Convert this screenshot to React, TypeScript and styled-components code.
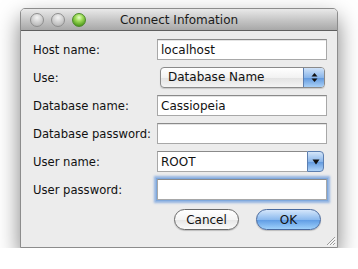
import styled, { createGlobalStyle } from "styled-components"

const GlobalStyle = createGlobalStyle`
    body {
        margin: 0;
        background: #ffffff;
        font-family: "Lucida Grande", "DejaVu Sans", sans-serif;
    }
`

type Row = { label: string; kind: "text" | "popup" | "combo"; value?: string; focused?: boolean }

const rows: Row[] = [
    { label: "Host name:", kind: "text", value: "localhost" },
    { label: "Use:", kind: "popup", value: "Database Name" },
    { label: "Database name:", kind: "text", value: "Cassiopeia" },
    { label: "Database password:", kind: "text", value: "" },
    { label: "User name:", kind: "combo", value: "ROOT" },
    { label: "User password:", kind: "text", value: "", focused: true },
]

export default function App() {
    return (
        <>
            <GlobalStyle />
            <Window>
                <TitleBar>
                    <Lights>
                        <Light />
                        <Light />
                        <Light $active />
                    </Lights>
                    <Title>Connect Infomation</Title>
                </TitleBar>
                <Body>
                    <Form>
                        {rows.map((row) => (
                            <FormRow key={row.label}>
                                <Label>{row.label}</Label>
                                {row.kind === "text" && (
                                    <TextField $focused={row.focused}>{row.value}</TextField>
                                )}
                                {row.kind === "popup" && (
                                    <Popup>
                                        <PopupText>{row.value}</PopupText>
                                        <Stepper>
                                            <svg width="7" height="11" viewBox="0 0 7 11">
                                                <path d="M3.5 1 L6.5 4.5 L0.5 4.5 Z" fill="#111" />
                                                <path d="M3.5 10 L6.5 6.5 L0.5 6.5 Z" fill="#111" />
                                            </svg>
                                        </Stepper>
                                    </Popup>
                                )}
                                {row.kind === "combo" && (
                                    <Combo>
                                        <ComboField>{row.value}</ComboField>
                                        <ComboArrow>
                                            <svg width="8" height="6" viewBox="0 0 8 6">
                                                <path d="M0.5 0.5 L7.5 0.5 L4 5.5 Z" fill="#111" />
                                            </svg>
                                        </ComboArrow>
                                    </Combo>
                                )}
                            </FormRow>
                        ))}
                    </Form>
                    <Buttons>
                        <PushButton>Cancel</PushButton>
                        <PushButton $primary>OK</PushButton>
                    </Buttons>
                    <Grip>
                        <svg width="11" height="11" viewBox="0 0 11 11">
                            <path d="M10 2 L2 10 M10 5 L5 10 M10 8 L8 10" stroke="#9a9a9a" strokeWidth="1" />
                            <path d="M10.5 3 L3 10.5 M10.5 6 L6 10.5 M10.5 9 L9 10.5" stroke="#fff" strokeWidth="1" />
                        </svg>
                    </Grip>
                </Body>
            </Window>
        </>
    )
}

const Window = styled.div`
    margin: 8px 0 0 20px;
    width: 318px;
    height: 240px;
    box-sizing: border-box;
    border: 1px solid #8c8c8c;
    border-radius: 5px 5px 0 0;
    box-shadow: 0 10px 22px rgba(0, 0, 0, 0.5);
    display: flex;
    flex-direction: column;
    overflow: hidden;
    background: #ececec;
`

const TitleBar = styled.div`
    position: relative;
    height: 21px;
    flex-shrink: 0;
    display: flex;
    align-items: center;
    justify-content: center;
    background: linear-gradient(#e9e9e9, #c4c4c4 55%, #a8a8a8);
    border-bottom: 1px solid #5f5f5f;
`

const Lights = styled.div`
    position: absolute;
    left: 9px;
    top: 4px;
    display: flex;
    gap: 7px;
`

const Light = styled.div<{ $active?: boolean }>`
    width: 12px;
    height: 12px;
    border-radius: 50%;
    border: 1px solid ${({ $active }) => ($active ? "#4c8a2a" : "#8e8e8e")};
    background: ${({ $active }) =>
        $active
            ? "radial-gradient(circle at 50% 30%, #e6ffc8 0, #9fdc5a 35%, #4f9a1c 80%, #7cc23b 100%)"
            : "radial-gradient(circle at 50% 30%, #f4f4f4 0, #d2d2d2 45%, #b4b4b4 85%, #cfcfcf 100%)"};
`

const Title = styled.div`
    font-size: 12px;
    color: #1a1a1a;
    margin-top: 1px;
`

const Body = styled.div`
    position: relative;
    flex: 1;
    padding: 8px 0 0 12px;
`

const Form = styled.div`
    display: flex;
    flex-direction: column;
    gap: 7px;
`

const FormRow = styled.div`
    display: flex;
    align-items: center;
    height: 21px;
`

const Label = styled.div`
    width: 124px;
    font-size: 11.6px;
    color: #111;
`

const TextField = styled.div<{ $focused?: boolean }>`
    box-sizing: border-box;
    width: 170px;
    height: 21px;
    padding: 2px 3px 0;
    background: #fff;
    border: 1px solid #a8a8a8;
    border-top-color: #8a8a8a;
    font-size: 12px;
    line-height: 17px;
    color: #111;
    box-shadow: ${({ $focused }) =>
        $focused ? "0 0 0 1px #7fa8dc, 0 0 2px 3px rgba(100, 150, 220, 0.65)" : "inset 0 1px 0 #e4e4e4"};
`

const Popup = styled.div`
    box-sizing: border-box;
    margin-left: 3px;
    width: 165px;
    height: 21px;
    display: flex;
    border: 1px solid #8a8a8a;
    border-radius: 4px;
    overflow: hidden;
    background: linear-gradient(#ffffff, #f2f2f2 50%, #e2e2e2 51%, #f4f4f4);
    box-shadow: 0 1px 1px rgba(0, 0, 0, 0.15);
`

const PopupText = styled.div`
    flex: 1;
    padding-left: 7px;
    font-size: 12px;
    line-height: 19px;
    color: #111;
`

const Stepper = styled.div`
    width: 20px;
    display: flex;
    align-items: center;
    justify-content: center;
    border-left: 1px solid #5d7fb0;
    background: linear-gradient(#cfe2f8, #8ab6ea 50%, #5f97dd 51%, #a9d0f7);
`

const Combo = styled.div`
    width: 167px;
    height: 21px;
    display: flex;
`

const ComboField = styled.div`
    box-sizing: border-box;
    flex: 1;
    height: 21px;
    padding: 1px 3px 0;
    background: #fff;
    border: 1px solid #a8a8a8;
    border-top-color: #8a8a8a;
    border-right: none;
    font-size: 12px;
    line-height: 18px;
    color: #111;
`

const ComboArrow = styled.div`
    box-sizing: border-box;
    width: 17px;
    height: 21px;
    display: flex;
    align-items: center;
    justify-content: center;
    border: 1px solid #5d7fb0;
    border-radius: 0 4px 4px 0;
    background: linear-gradient(#d6e7fa, #8ab6ea 50%, #5f97dd 51%, #b0d4f8);
`

const Buttons = styled.div`
    display: flex;
    justify-content: flex-end;
    gap: 17px;
    margin-top: 9px;
    padding-right: 16px;
`

const PushButton = styled.div<{ $primary?: boolean }>`
    box-sizing: border-box;
    width: 65px;
    height: 21px;
    border-radius: 11px;
    display: flex;
    align-items: center;
    justify-content: center;
    font-size: 12px;
    color: #111;
    border: 1px solid ${({ $primary }) => ($primary ? "#4a6a9e" : "#6a6a6a")};
    background: ${({ $primary }) =>
        $primary
            ? "linear-gradient(#d4e6fb, #8cbaee 50%, #5d9ae3 51%, #9ed0fb)"
            : "linear-gradient(#ffffff, #f4f4f4 50%, #e6e6e6 51%, #fafafa)"};
    box-shadow: 0 1px 1px rgba(0, 0, 0, 0.2);
`

const Grip = styled.div`
    position: absolute;
    right: 1px;
    bottom: 1px;
    width: 11px;
    height: 11px;
    display: flex;
`
